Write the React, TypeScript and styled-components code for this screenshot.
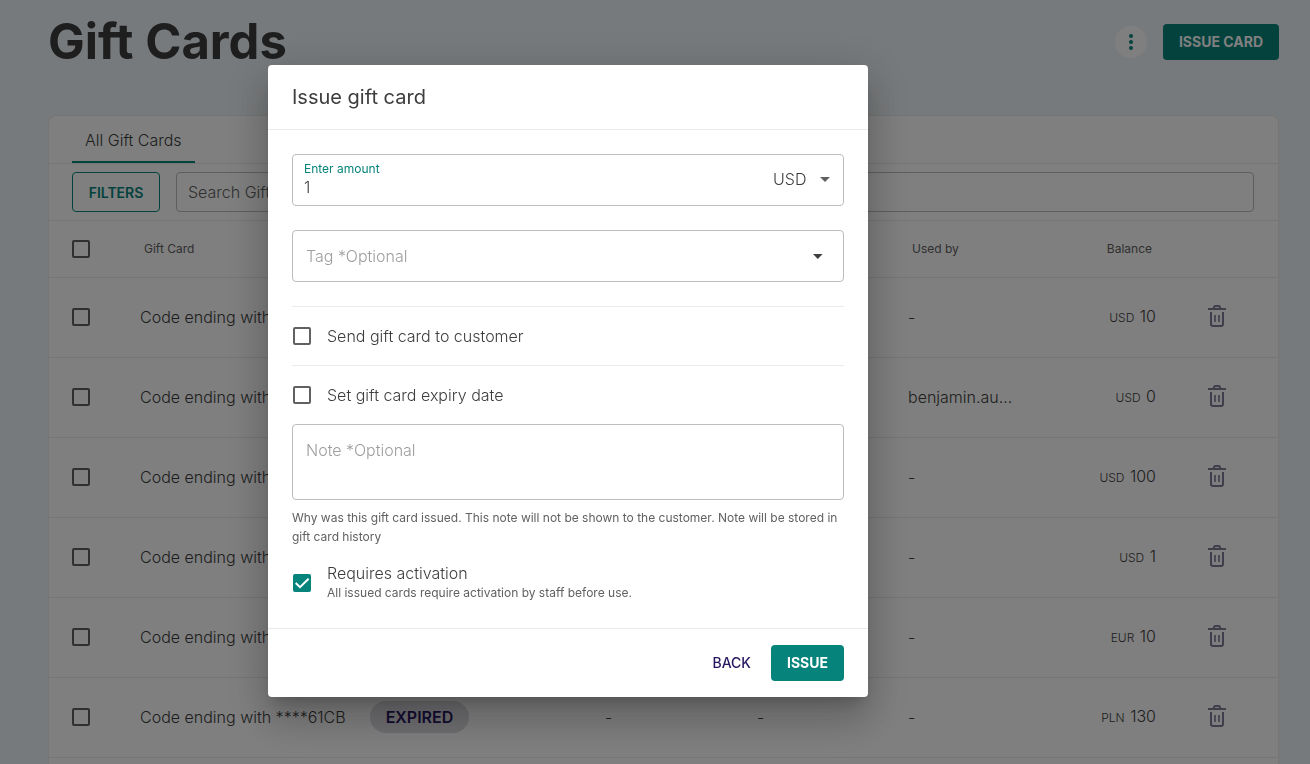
import React from "react";
import styled, { createGlobalStyle, css } from "styled-components";

const color = {
  page: "#eff5f8",
  paper: "#ffffff",
  primary: "#06847b",
  secondary: "#28175f",
  text: "#3d3d3d",
  muted: "#616161",
  placeholder: "#9e9e9e",
  field: "#bdbdbd",
  divider: "#eaeaea",
};

const GlobalStyle = createGlobalStyle`
  *, *::before, *::after { box-sizing: border-box; }
  body {
    margin: 0;
    overflow: hidden;
    background: ${color.page};
    color: ${color.text};
    font: 300 16px/24px Inter, "Liberation Sans", sans-serif;
  }
  button, input, select, textarea { font: inherit; color: inherit; }
`;

const Page = styled.main`
  display: flex;
  flex-direction: column;
  height: 100vh;
  overflow: hidden;
  padding: 0 31px 0 48px;
`;

const PageHeader = styled.header`
  display: flex;
  align-items: center;
  gap: 16px;
  height: 84px;
`;

const PageTitle = styled.h1`
  flex: 1;
  margin: 0;
  font-size: 49px;
  line-height: 58px;
  font-weight: 700;
`;

const MenuButton = styled.button`
  display: flex;
  align-items: center;
  justify-content: center;
  width: 32px;
  height: 32px;
  padding: 0;
  border: 0;
  border-radius: 50%;
  background: ${color.paper};
  color: ${color.primary};
`;

type Variant = "primary" | "outlined" | "text";

const variants = {
  primary: css`
    background: ${color.primary};
    color: #fff;
    font-weight: 700;
  `,
  outlined: css`
    min-width: 88px;
    height: 40px;
    padding: 1px 14px 0;
    border: 1px solid ${color.primary};
    background: transparent;
    color: ${color.primary};
  `,
  text: css`
    background: transparent;
    color: ${color.secondary};
    font-weight: 500;
  `,
};

const Button = styled.button<{ $variant: Variant }>`
  height: 36px;
  padding: 0 16px;
  border: 0;
  border-radius: 4px;
  font-size: 14px;
  line-height: 20px;
  font-weight: 600;
  text-transform: uppercase;
  ${({ $variant }) => variants[$variant]}
`;

const Card = styled.section`
  flex: 1;
  margin-top: 31px;
  border: 1px solid ${color.divider};
  border-bottom: 0;
  border-radius: 8px 8px 0 0;
  background: ${color.paper};
`;

const Tabs = styled.div`
  display: flex;
  padding: 0 23px;
  border-bottom: 1px solid ${color.divider};
`;

const Tab = styled.button`
  height: 47px;
  padding: 2px 13px 0;
  border: 0;
  border-bottom: 2px solid ${color.primary};
  background: transparent;
`;

const FilterBar = styled.div`
  display: flex;
  gap: 16px;
  padding: 8px 24px 8px 23px;
  border-bottom: 1px solid ${color.divider};
`;

const SearchInput = styled.input`
  flex: 1;
  height: 40px;
  padding: 0 11px;
  border: 1px solid ${color.field};
  border-radius: 4px;
  background: transparent;
  &::placeholder {
    color: ${color.muted};
    opacity: 1;
  }
`;

const Table = styled.table`
  width: 100%;
  table-layout: fixed;
  border-collapse: collapse;
`;

const Row = styled.tr`
  height: 80px;
  border-bottom: 1px solid ${color.divider};
`;

const HeadRow = styled(Row)`
  height: 56px;
`;

const Column = styled.col<{ $width?: number }>`
  width: ${({ $width }) => ($width ? `${$width}px` : "auto")};
`;

const HeadCell = styled.th<{ $align?: "right" }>`
  padding: 0 ${({ $align }) => ($align ? 28 : 16)}px 0 16px;
  color: ${color.muted};
  font-size: 12px;
  font-weight: 400;
  text-align: ${({ $align }) => $align ?? "left"};
`;

const Cell = styled.td<{ $align?: "right" }>`
  padding: 0 ${({ $align }) => ($align ? 24 : 12)}px 0 12px;
  text-align: ${({ $align }) => $align ?? "left"};
  white-space: nowrap;
`;

const CheckCell = styled.td`
  padding: 0 0 0 23px;
`;

const ActionCell = styled.td`
  padding: 0 0 2px 28px;
`;

const NameLine = styled.div`
  display: flex;
  align-items: center;
  gap: 24px;
`;

const Chip = styled.span`
  padding: 4px 16px;
  border-radius: 16px;
  background: #dddce2;
  color: ${color.secondary};
  font-weight: 600;
`;

const Currency = styled.span`
  margin-right: 1px;
  font-size: 12px;
`;

const IconButton = styled.button`
  display: flex;
  padding: 0;
  border: 0;
  background: transparent;
  color: #827a96;
`;

const CheckWrap = styled.span`
  position: relative;
  display: flex;
  width: 18px;
  height: 18px;
  svg {
    position: absolute;
    inset: 0;
    pointer-events: none;
  }
`;

const CheckInput = styled.input`
  appearance: none;
  width: 18px;
  height: 18px;
  margin: 0;
  border: 2px solid ${color.muted};
  border-radius: 2px;
  background: transparent;
  &:checked {
    border-color: ${color.primary};
    background: ${color.primary};
  }
  & + svg {
    display: none;
  }
  &:checked + svg {
    display: block;
  }
`;

const Backdrop = styled.div`
  position: fixed;
  inset: 0;
  display: flex;
  align-items: center;
  justify-content: center;
  padding: 0 174px 2px 0;
  background: rgba(0, 0, 0, 0.5);
`;

const Dialog = styled.form`
  width: 600px;
  max-width: 100%;
  border-radius: 4px;
  background: ${color.paper};
  box-shadow: 0 11px 15px -7px rgba(0, 0, 0, 0.2),
    0 24px 38px 3px rgba(0, 0, 0, 0.14), 0 9px 46px 8px rgba(0, 0, 0, 0.12);
`;

const DialogTitle = styled.h2`
  margin: 0;
  padding: 16px 24px;
  border-bottom: 1px solid ${color.divider};
  font-size: 20px;
  line-height: 32px;
  font-weight: 400;
`;

const DialogBody = styled.div`
  padding: 24px 24px 25px;
`;

const Field = styled.div`
  display: flex;
  align-items: center;
  height: 52px;
  margin-bottom: 24px;
  border: 1px solid ${color.field};
  border-radius: 4px;
`;

const AmountPart = styled.label`
  display: flex;
  flex: 1;
  flex-direction: column;
  padding: 0 0 2px 11px;
  color: ${color.primary};
  font-size: 12px;
  line-height: 16px;
  font-weight: 400;
`;

const PlainInput = styled.input`
  width: 100%;
  height: 20px;
  padding: 0;
  border: 0;
  outline: 0;
  background: transparent;
  color: ${color.text};
  font-size: 16px;
  font-weight: 300;
  &::placeholder {
    color: ${color.placeholder};
    opacity: 1;
  }
`;

const SelectWrap = styled.span`
  display: flex;
  align-items: center;
  gap: 13px;
  padding: 0 13px 2px 0;
  color: ${color.muted};
`;

const CurrencySelect = styled.select`
  appearance: none;
  padding: 0;
  border: 0;
  background: transparent;
  color: ${color.text};
`;

const TagPart = styled.label`
  display: flex;
  flex: 1;
  align-items: center;
  gap: 13px;
  padding: 0 20px 0 13px;
`;

const Divider = styled.hr`
  height: 1px;
  margin: 0;
  border: 0;
  background: ${color.divider};
`;

const Option = styled.label<{ $tall?: boolean }>`
  display: flex;
  align-items: center;
  gap: 16px;
  height: ${({ $tall }) => ($tall ? 40 : 58)}px;
  padding-left: 1px;
`;

const OptionText = styled.span`
  display: flex;
  flex-direction: column;
  padding-bottom: 1px;
  line-height: 20px;
`;

const Hint = styled.small`
  color: ${color.muted};
  font-size: 12px;
  line-height: 19px;
  font-weight: 400;
`;

const NoteHint = styled(Hint)`
  display: block;
  margin: 8px 0 17px;
`;

const Note = styled.textarea`
  display: block;
  width: 100%;
  height: 76px;
  padding: 13px;
  border: 1px solid ${color.field};
  border-radius: 4px;
  resize: none;
  &::placeholder {
    color: ${color.placeholder};
    opacity: 1;
  }
`;

const DialogActions = styled.footer`
  display: flex;
  justify-content: flex-end;
  gap: 4px;
  padding: 16px 24px;
  border-top: 1px solid ${color.divider};
`;

function Checkbox(props: React.InputHTMLAttributes<HTMLInputElement>) {
  return (
    <CheckWrap>
      <CheckInput type="checkbox" {...props} />
      <svg viewBox="0 0 18 18" fill="none" stroke="#fff" strokeWidth="2">
        <path d="M2.7 9 7 13.2 15.6 4.7" />
      </svg>
    </CheckWrap>
  );
}

function Caret() {
  return (
    <svg width="10" height="5" viewBox="0 0 10 5" fill="currentColor">
      <path d="M0 0h10L5 5z" />
    </svg>
  );
}

function TrashIcon() {
  return (
    <svg width="18" height="22" viewBox="0 0 18 22" fill="none" stroke="currentColor" strokeWidth="2">
      <path d="M0 4h18" />
      <path d="M6 4V2.5A1.5 1.5 0 0 1 7.5 1h3A1.5 1.5 0 0 1 12 2.5V4" />
      <path d="M3 7v12a2 2 0 0 0 2 2h8a2 2 0 0 0 2-2V7" />
      <path d="M7 10v7M11 10v7" strokeWidth="1.6" />
    </svg>
  );
}

const cards = [
  { code: "B2F4", usedBy: "-", currency: "USD", balance: 10 },
  { code: "90AC", usedBy: "benjamin.au...", currency: "USD", balance: 0 },
  { code: "7D1E", usedBy: "-", currency: "USD", balance: 100 },
  { code: "C38A", usedBy: "-", currency: "USD", balance: 1 },
  { code: "5E60", usedBy: "-", currency: "EUR", balance: 10 },
  { code: "61CB", usedBy: "-", currency: "PLN", balance: 130, expired: true },
];

export default function App() {
  return (
    <>
      <GlobalStyle />
      <Page>
        <PageHeader>
          <PageTitle>Gift Cards</PageTitle>
          <MenuButton aria-label="More options">
            <svg width="4" height="16" viewBox="0 0 4 16" fill="currentColor">
              <circle cx="2" cy="2" r="2" />
              <circle cx="2" cy="8" r="2" />
              <circle cx="2" cy="14" r="2" />
            </svg>
          </MenuButton>
          <Button $variant="primary">Issue card</Button>
        </PageHeader>
        <Card>
          <Tabs>
            <Tab>All Gift Cards</Tab>
          </Tabs>
          <FilterBar>
            <Button $variant="outlined">Filters</Button>
            <SearchInput aria-label="Search" placeholder="Search Gift Cards..." />
          </FilterBar>
          <Table>
            <colgroup>
              <Column $width={79} />
              <Column />
              <Column $width={152} />
              <Column $width={151} />
              <Column $width={152} />
              <Column $width={132} />
              <Column $width={98} />
            </colgroup>
            <thead>
              <HeadRow>
                <CheckCell>
                  <Checkbox aria-label="Select all" />
                </CheckCell>
                <HeadCell>Gift Card</HeadCell>
                <HeadCell>Tag</HeadCell>
                <HeadCell>Product</HeadCell>
                <HeadCell>Used by</HeadCell>
                <HeadCell $align="right">Balance</HeadCell>
                <td />
              </HeadRow>
            </thead>
            <tbody>
              {cards.map((card) => (
                <Row key={card.code}>
                  <CheckCell>
                    <Checkbox aria-label={`Select ${card.code}`} />
                  </CheckCell>
                  <Cell>
                    <NameLine>
                      <span>Code ending with ****{card.code}</span>
                      {card.expired && <Chip>EXPIRED</Chip>}
                    </NameLine>
                  </Cell>
                  <Cell>-</Cell>
                  <Cell>-</Cell>
                  <Cell>{card.usedBy}</Cell>
                  <Cell $align="right">
                    <Currency>{card.currency}</Currency> {card.balance}
                  </Cell>
                  <ActionCell>
                    <IconButton aria-label="Delete">
                      <TrashIcon />
                    </IconButton>
                  </ActionCell>
                </Row>
              ))}
            </tbody>
          </Table>
        </Card>
      </Page>
      <Backdrop>
        <Dialog role="dialog" aria-labelledby="dialog-title" onSubmit={(e) => e.preventDefault()}>
          <DialogTitle id="dialog-title">Issue gift card</DialogTitle>
          <DialogBody>
            <Field>
              <AmountPart>
                Enter amount
                <PlainInput defaultValue="1" />
              </AmountPart>
              <SelectWrap>
                <CurrencySelect aria-label="Currency">
                  <option>USD</option>
                  <option>EUR</option>
                  <option>PLN</option>
                </CurrencySelect>
                <Caret />
              </SelectWrap>
            </Field>
            <Field>
              <TagPart>
                <PlainInput aria-label="Tag" placeholder="Tag *Optional" />
                <Caret />
              </TagPart>
            </Field>
            <Divider />
            <Option>
              <Checkbox />
              Send gift card to customer
            </Option>
            <Divider />
            <Option>
              <Checkbox />
              Set gift card expiry date
            </Option>
            <Note aria-label="Note" aria-describedby="note-hint" placeholder="Note *Optional" />
            <NoteHint id="note-hint">
              Why was this gift card issued. This note will not be shown to the customer. Note will
              be stored in gift card history
            </NoteHint>
            <Option $tall>
              <Checkbox defaultChecked />
              <OptionText>
                Requires activation
                <Hint>All issued cards require activation by staff before use.</Hint>
              </OptionText>
            </Option>
          </DialogBody>
          <DialogActions>
            <Button type="button" $variant="text">Back</Button>
            <Button $variant="primary">Issue</Button>
          </DialogActions>
        </Dialog>
      </Backdrop>
    </>
  );
}
